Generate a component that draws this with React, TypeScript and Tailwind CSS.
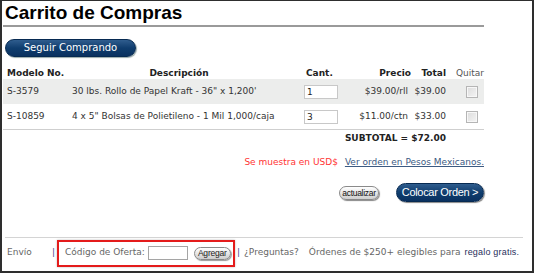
import React from 'react';

const verdana = "font-['DejaVu_Sans',Verdana,sans-serif]";
const arial = "font-['Liberation_Sans',Arial,sans-serif]";

const Checkbox = () => (
    <span className="block w-[12px] h-[12px] border border-[#b5b5b5] bg-gradient-to-br from-[#dcdcdc] to-[#f4f4f4] shadow-[inset_0_0_0_1px_#f7f7f7]" />
);

const QtyInput = ({ value }: { value: string }) => (
    <input
        defaultValue={value}
        className={`${verdana} block w-[34px] h-[14px] border border-[#c8c8c8] bg-white px-[2px] text-[9px] text-[#222] outline-none`}
    />
);

const rows = [
    { model: 'S-3579', desc: "30 lbs. Rollo de Papel Kraft - 36\" x 1,200'", qty: '1', price: '$39.00/rll', total: '$39.00', shade: true },
    { model: 'S-10859', desc: '4 x 5" Bolsas de Polietileno - 1 Mil 1,000/caja', qty: '3', price: '$11.00/ctn', total: '$33.00', shade: false },
];

const cols = 'grid grid-cols-[69px_228px_45px_66px_37px_36px]';

export default function App() {
    return (
        <div className="w-[534px] h-[273px] bg-white border-[#2e2e2e] border-t border-x-2 border-b-2 overflow-hidden">
            <div className="pl-[1px] w-[482px]">
                <h1 className={`${arial} text-[19px] leading-[22px] font-bold text-black pl-[2px] pt-[1px]`}>Carrito de Compras</h1>
                <div className="mt-[1px] h-[2px] bg-[#9a9a9a]" />

                <button
                    className={`${verdana} mt-[12px] ml-[2px] w-[131px] h-[18px] rounded-full bg-gradient-to-b from-[#2f5d8e] via-[#0f3d6e] to-[#0a3160] border border-[#072a52] text-white text-[10px] leading-[16px] shadow-[1px_1px_1px_#9aa]`}
                >
                    Seguir Comprando
                </button>

                <div className={`${verdana} mt-[10px] text-[9px]`}>
                    <div className={`${cols} h-[12px] items-center font-bold text-[#222] leading-[12px]`}>
                        <div className="pl-[4px]">Modelo No.</div>
                        <div className="text-center pr-[14px]">Descripción</div>
                        <div className="pl-[6px]">Cant.</div>
                        <div className="text-right">Precio</div>
                        <div className="text-right pr-[2px]">Total</div>
                        <div className="pl-[8px] font-normal text-[#555]">Quitar</div>
                    </div>
                    {rows.map((r) => (
                        <div key={r.model} className={`${cols} h-[25px] items-center text-[#333] ${r.shade ? 'bg-[#ecedec]' : 'bg-white'}`}>
                            <div className="pl-[4px]">{r.model}</div>
                            <div className="whitespace-nowrap">{r.desc}</div>
                            <div className="pl-[4px]"><QtyInput value={r.qty} /></div>
                            <div className="text-right pr-[3px]">{r.price}</div>
                            <div className="text-right pr-[2px]">{r.total}</div>
                            <div className="flex justify-center pl-[11px]"><Checkbox /></div>
                        </div>
                    ))}
                    <div className="h-[1px] bg-[#cfcfcf]" />
                    <div className="flex justify-end pr-[38px] pt-[2px] h-[16px] items-center font-bold text-[#222]">
                        SUBTOTAL = $72.00
                    </div>

                    <div className="flex justify-end items-center mt-[11px] h-[12px] gap-[7px]">
                        <span className="text-[#ff3333]">Se muestra en USD$</span>
                        <a href="#" className="text-[#3c5a82] underline">Ver orden en Pesos Mexicanos.</a>
                    </div>

                    <div className="flex justify-end items-center mt-[14px] gap-[17px]">
                        <button className={`${arial} h-[14px] w-[40px] rounded-full border border-[#8a8a8a] bg-gradient-to-b from-[#ffffff] to-[#cfcfcf] text-[8.5px] leading-[12px] tracking-[-0.3px] text-[#111] shadow-[1px_1px_1px_#888]`}>
                            actualizar
                        </button>
                        <button className={`${arial} h-[19px] w-[88px] rounded-full bg-gradient-to-b from-[#2f5d8e] via-[#0f3d6e] to-[#0a3160] border border-[#072a52] text-white text-[11px] leading-[17px] tracking-[-0.3px] shadow-[1px_1px_1px_#888]`}>
                            Colocar Orden &gt;
                        </button>
                    </div>
                </div>
            </div>

            <div className={`${verdana} mt-[35px] ml-[3px] w-[518px] border-t border-[#d4d4d4] text-[9px] text-[#666]`}>
                <div className="flex items-center h-[29px] pt-[1px]">
                    <span className="pl-[2px] w-[47px]">Envío</span>
                    <span className="text-[#4a3f8f]">|</span>
                    <div className="ml-[2px] flex items-center h-[27px] w-[178px] border-2 border-[#e41b1b] shadow-[0_0_2px_#bbb] pl-[6px]">
                        <span>Código de Oferta:</span>
                        <input className="ml-[3px] w-[40px] h-[14px] border border-[#a5a5a5] bg-white outline-none" />
                        <button className={`${arial} ml-[6px] h-[13px] w-[37px] rounded-full border border-[#8a8a8a] bg-gradient-to-b from-[#ffffff] to-[#cdcdcd] text-[8.5px] leading-[11px] tracking-[-0.2px] px-0 text-[#222] shadow-[1px_1px_1px_#999]`}>
                            Agregar
                        </button>
                    </div>
                    <span className="ml-[2px] text-[#4a3f8f]">|</span>
                    <span className="ml-[4px]">¿Preguntas?</span>
                    <span className="ml-[10px]">Órdenes de $250+ elegibles para </span>
                    <span className={`${arial} ml-[4px] text-[#1f2f5c] tracking-[0.2px]`}>regalo gratis.</span>
                </div>
            </div>
        </div>
    );
}
